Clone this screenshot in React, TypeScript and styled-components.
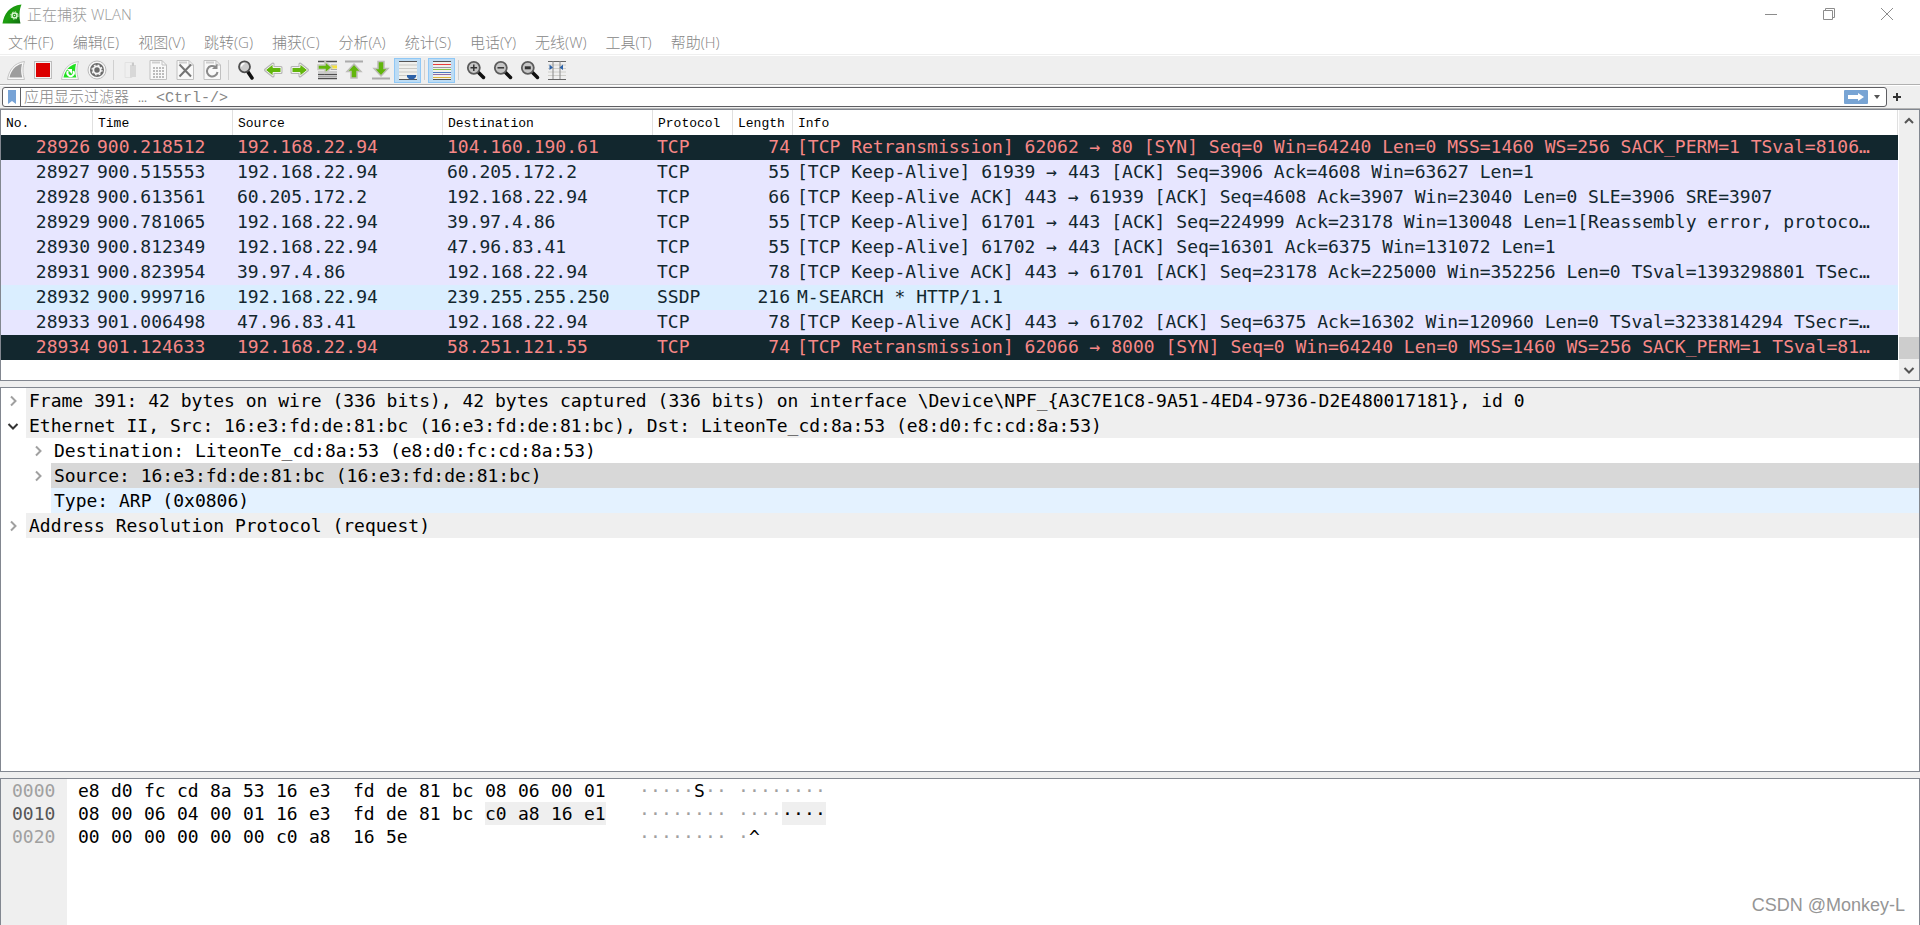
import React from 'react';
import styled, { createGlobalStyle, css } from 'styled-components';

const UI_FONT = '"Open Sans", "Noto Sans CJK SC", sans-serif';
const HEADER_FONT = '"Liberation Mono", "Noto Sans CJK SC", monospace';
const DATA_FONT = '"DejaVu Sans Mono", monospace';

const GlobalStyle = createGlobalStyle`
  *, *::before, *::after { box-sizing: border-box; }
  body { margin: 0; background: #efefef; }
  button { border: 0; padding: 0; margin: 0; background: none; font: inherit; color: inherit; }
  svg { display: block; }
`;

const Window = styled.div`
  position: relative;
  display: flex;
  flex-direction: column;
  height: 100vh;
  min-height: 600px;
  overflow: hidden;
  background: #efefef;
`;

/* ---- title bar and menu ---- */

const TitleBar = styled.header`
  display: flex;
  align-items: center;
  height: 29px;
  padding: 0 4px 1px 2px;
  background: #fff;
  color: #999;
  font: 300 15px/20px ${UI_FONT};
`;

const Title = styled.h1`
  flex: 1;
  margin: 0 0 0 5px;
  font: inherit;
`;

const WindowButton = styled.button`
  display: flex;
  align-items: center;
  justify-content: center;
  width: 58px;
  height: 28px;
`;

const MenuBar = styled.nav`
  display: flex;
  height: 27px;
  padding-bottom: 1px;
  border-bottom: 1px solid #fff;
  background: #fff;
  box-shadow: inset 0 -1px #efefef;
`;

const MenuButton = styled.button`
  padding: 0 11px 0 8px;
  color: #858585;
  font: 300 15px/26px ${UI_FONT};
`;

/* ---- toolbar ---- */

const ToolBar = styled.div`
  display: flex;
  align-items: center;
  height: 29px;
  padding-left: 2px;
  border-bottom: 1px solid #b0b0b0;
`;

const ToolButton = styled.button<{ $on?: boolean }>`
  display: flex;
  align-items: center;
  justify-content: center;
  width: 27px;
  height: 25px;
  border: 1px solid ${p => (p.$on ? '#90c8f6' : 'transparent')};
  background: ${p => (p.$on ? '#bddcf4' : 'none')};
`;

const ToolDivider = styled.span`
  width: 1px;
  height: 20px;
  margin: 0 3px;
  background: #d0d0d0;
`;

/* ---- display filter ---- */

const FilterBar = styled.form`
  display: flex;
  align-items: center;
  height: 24px;
  padding: 0 13px 0 2px;
  border-top: 1px solid #fff;
  border-bottom: 1px solid #b4b4b4;
`;

const FilterField = styled.div`
  display: flex;
  flex: 1;
  align-items: center;
  height: 20px;
  border: 1px solid #5e5e62;
  border-radius: 3px;
  background: #fff;
`;

const BookmarkButton = styled.button`
  display: flex;
  align-items: center;
  justify-content: center;
  width: 18px;
  height: 18px;
  border-right: 1px solid #5e5e62;
`;

const FilterInput = styled.input`
  flex: 1;
  min-width: 0;
  height: 18px;
  padding: 2px 3px 0;
  border: 0;
  outline: 0;
  background: transparent;
  color: #222;
  font: 300 15px/16px ${HEADER_FONT};
  &::placeholder { color: #858585; opacity: 1; }
`;

const ApplyButton = styled.button`
  display: flex;
  align-items: center;
  justify-content: center;
  width: 24px;
  height: 14px;
  border-radius: 1px;
  background: #78a4d4;
`;

const HistoryButton = styled.button`
  display: flex;
  align-items: center;
  justify-content: center;
  width: 18px;
  height: 18px;
`;

const AddButton = styled.button`
  display: flex;
  align-items: center;
  justify-content: center;
  width: 20px;
  height: 18px;
`;

/* ---- panes ---- */

const Pane = styled.section<{ $share: number; $last?: boolean }>`
  display: flex;
  flex: ${p => p.$share} 1 0;
  min-height: 0;
  overflow: hidden;
  border: 1px solid #828790;
  ${p => p.$last && css`border-bottom: 0;`}
  background: #fff;
`;

const Splitter = styled.div`
  flex: none;
  height: 6px;
`;

const PacketArea = styled.div`
  flex: 1;
  min-width: 0;
  overflow: hidden;
`;

const PacketTable = styled.table`
  width: 100%;
  table-layout: fixed;
  border-collapse: separate;
  border-spacing: 0;
`;

const Col = styled.col<{ $w?: number }>`
  width: ${p => (p.$w ? `${p.$w}px` : 'auto')};
`;

const HeadCell = styled.th`
  height: 25px;
  padding: 2px 0 0 5px;
  border-right: 1px solid #e0e0e0;
  color: #000;
  font: 13px/23px ${HEADER_FONT};
  text-align: left;
  white-space: nowrap;
`;

type Tone = 'bad' | 'tcp' | 'udp';

const tones: Record<Tone, { bg: string; fg: string }> = {
  bad: { bg: '#12272e', fg: '#f78787' },
  tcp: { bg: '#e7e6ff', fg: '#12272e' },
  udp: { bg: '#daeeff', fg: '#12272e' },
};

const PacketRow = styled.tr<{ $tone: Tone }>`
  background: ${p => tones[p.$tone].bg};
  color: ${p => tones[p.$tone].fg};
`;

const Cell = styled.td<{ $right?: boolean }>`
  height: 25px;
  padding: 0 3px 2px 4px;
  overflow: hidden;
  font: 18px/23px ${DATA_FONT};
  text-align: ${p => (p.$right ? 'right' : 'left')};
  text-overflow: ellipsis;
  white-space: nowrap;
`;

const ScrollBar = styled.div`
  display: flex;
  flex-direction: column;
  flex: none;
  width: 21px;
  border-left: 1px solid #fff;
  background: #efefef;
`;

const ScrollButton = styled.button`
  display: flex;
  align-items: center;
  justify-content: center;
  height: 21px;
`;

const ScrollTrack = styled.div`
  display: flex;
  flex: 1;
  flex-direction: column;
  justify-content: flex-end;
`;

const ScrollThumb = styled.div`
  height: 22px;
  background: #cdcdcd;
`;

/* ---- details tree ---- */

const Tree = styled.ul`
  flex: 1;
  min-width: 0;
  margin: 0;
  padding: 0;
  list-style: none;
`;

const TreeRow = styled.li<{ $level: number }>`
  display: flex;
  height: 25px;
  padding-left: ${p => p.$level * 25}px;
`;

const TreeToggle = styled.button`
  display: flex;
  align-items: center;
  justify-content: center;
  flex: none;
  width: 25px;
  height: 25px;
  padding-right: 2px;
`;

const TreeGap = styled.span`
  flex: none;
  width: 25px;
`;

const TreeText = styled.span<{ $bg: string }>`
  flex: 1;
  padding-left: 3px;
  overflow: hidden;
  background: ${p => p.$bg};
  color: #000;
  font: 18px/25px ${DATA_FONT};
  white-space: nowrap;
`;

/* ---- byte view ---- */

const Bytes = styled.div`
  display: flex;
  flex: 1;
  color: #000;
  font: 18px/23px ${DATA_FONT};
`;

const Offsets = styled.div`
  flex: none;
  width: 66px;
  padding-left: 11px;
  background: #efefef;
`;

const Offset = styled.div<{ $current?: boolean }>`
  color: ${p => (p.$current ? '#555' : '#a0a0a0')};
`;

const HexBlock = styled.div`
  padding-left: 11px;
`;

const AsciiBlock = styled.div`
  padding-left: 22px;
`;

const ByteLine = styled.div`
  display: flex;
  height: 23px;
`;

const Group = styled.span<{ $wide?: boolean }>`
  display: flex;
  min-width: ${p => (p.$wide ? 264 : 88)}px;
  & + & { margin-left: 11px; }
`;

const HexByte = styled.span<{ $marked?: boolean; $end?: boolean }>`
  width: 33px;
  ${p => p.$marked && css`background: #efefef;`}
  ${p => p.$end && css`width: 22px; margin-right: 11px;`}
`;

const AsciiChar = styled.span<{ $marked?: boolean; $dim?: boolean }>`
  width: 11px;
  text-align: center;
  color: ${p => (p.$dim ? '#a0a0a0' : '#000')};
  ${p => p.$marked && css`background: #efefef;`}
`;

const Watermark = styled.div`
  position: absolute;
  right: 15px;
  bottom: 8px;
  color: #959595;
  font: 18px/24px "Liberation Sans", sans-serif;
  text-shadow: -1px -1px #fff;
`;

/* ---- icons ---- */

const Icon = ({ children, size = 20 }: { children: React.ReactNode; size?: number }) => (
  <svg width={size} height={size} viewBox={`0 0 ${size} ${size}`} fill="none" aria-hidden="true">
    {children}
  </svg>
);

const Logo = () => (
  <Icon>
    <defs>
      <linearGradient id="logo" x1="0" y1="0" x2="1" y2="1">
        <stop offset="0" stopColor="#0b7d0b" />
        <stop offset="0.5" stopColor="#1ea00f" />
        <stop offset="1" stopColor="#0d6b10" />
      </linearGradient>
    </defs>
    <path d="M.5 19.5C2 10 7 2 19.5.5C17 6 17 13 18.500 19.500Z" fill="url(#logo)" />
    <circle cx="12.500" cy="11.500" r="2.500" stroke="#d8f5d0" strokeWidth="1.500" />
    <circle cx="12.500" cy="11.500" r="3.700" stroke="#d8f5d0" strokeWidth="1" strokeDasharray="1.400 1.500" />
    <circle cx="12.500" cy="11.500" r=".8" fill="#d8f5d0" />
  </Icon>
);

const FIN = 'M1.500 19.500C3 10 8 3 18.500 1.500C16.500 7 16.500 13 18.500 19.500Z';
const FIN_FILL = 'M3.500 17.500C5 11 9 5.500 16 3.800C14.800 9 14.800 13 16.300 17.500Z';

const StartIcon = () => (
  <Icon>
    <path d={FIN} fill="#fafafa" stroke="#c4c4c4" />
    <path d={FIN_FILL} fill="#9d9d9d" />
  </Icon>
);

const StopIcon = () => (
  <Icon>
    <rect x="1.500" y="1.500" width="17" height="17" fill="#f4f4f4" stroke="#bdbdbd" />
    <rect x="3" y="3" width="14" height="14" fill="#dc0000" />
  </Icon>
);

const RestartIcon = () => (
  <Icon>
    <path d={FIN} fill="#fafafa" stroke="#c4c4c4" />
    <path d={FIN_FILL} fill="#1fe01f" />
    <path d="M8 11a3.200 3.200 0 1 0 5.200 0" stroke="#fff" strokeWidth="2" />
    <path d="M7 9h5v5z" fill="#fff" />
  </Icon>
);

const OptionsIcon = () => (
  <Icon>
    <circle cx="10" cy="10" r="9" fill="#f7f7f7" stroke="#bbb" />
    <circle cx="10" cy="10" r="7" fill="#6b6b6b" />
    <circle cx="10" cy="10" r="3.600" stroke="#f7f7f7" strokeWidth="1.800" />
    <circle cx="10" cy="10" r="5" stroke="#f7f7f7" strokeWidth="1.200" strokeDasharray="1.900 2.027" />
  </Icon>
);

const FileIcon = () => (
  <Icon>
    <path d="M4 2.500h7v15H4z" fill="#efefef" stroke="#e2e2e2" />
    <path d="M9 5h6v12h-4L9 18z" fill="#d8d8d8" />
    <path d="M11 2.500h2V6h-2z" fill="#c9c9c9" />
  </Icon>
);

const Page = ({ children }: { children: React.ReactNode }) => (
  <Icon>
    <path d="M2 .5h12l4.500 4.500v14.500H2z" fill="#f9f9f9" stroke="#c0c0c0" />
    <path d="M14 .5V5h4.500" stroke="#c0c0c0" />
    <path d="M4 2.500h8" stroke="#cfcfcf" strokeWidth="2" />
    {children}
  </Icon>
);

const SaveIcon = () => (
  <Page>
    <path d="M5 8h11M5 11h11M5 14h11M5 17h11" stroke="#bcbcbc" strokeWidth="2" strokeDasharray="2 1" />
  </Page>
);

const CloseFileIcon = () => (
  <Page>
    <path d="M4.500 4.500l11.500 12M16 4.500l-11.500 12" stroke="#747474" strokeWidth="2" />
  </Page>
);

const ReloadIcon = () => (
  <Page>
    <path d="M13.500 7A5.300 5.300 0 1 0 15.500 12" stroke="#8a8a8a" strokeWidth="2" />
    <path d="M15.500 3.500v5.500H10Z" fill="#8a8a8a" />
  </Page>
);

const Lens = ({ children }: { children?: React.ReactNode }) => (
  <Icon>
    <path d="M12.500 12.500l5 5" stroke="#111" strokeWidth="3.500" strokeLinecap="round" />
    <circle cx="7.800" cy="7.800" r="6" fill="#c6c6c6" stroke="#5b5b5b" strokeWidth="1.800" />
    {children}
  </Icon>
);

const FindIcon = () => (
  <Icon>
    <path d="M12 12l4 6" stroke="#111" strokeWidth="3.500" strokeLinecap="round" />
    <circle cx="8.500" cy="6.800" r="5.500" fill="#ccc" stroke="#4f4f4f" strokeWidth="1.800" />
    <path d="M5.500 6.500a3 3 0 0 1 3-3" stroke="#fff" strokeWidth="1.500" />
  </Icon>
);

const ARROW_RIGHT = 'M2 7.500h8V4L17.500 10 10 16V12.500H2z';

const ArrowIcon = ({ turn }: { turn: number }) => (
  <Icon>
    <g transform={`rotate(${turn} 10 10)`}>
      <path d={ARROW_RIGHT} fill="#6b9f3a" stroke="#b5b5b5" strokeWidth="3" strokeLinejoin="round" />
      <path d={ARROW_RIGHT} fill="#62b60c" stroke="#f2f2ee" strokeWidth="1" />
    </g>
  </Icon>
);

const GotoIcon = () => (
  <Icon>
    <path d="M1 1.500h19M1 14.500h19M1 18.500h19" stroke="#4f4f4f" strokeWidth="1.500" />
    <path d="M14 5h6M14 9.500h6M1 12h19M1 16.500h19" stroke="#aaa" />
    <path d="M14 7h6" stroke="#f5e13c" strokeWidth="3" />
    <path d="M1 5h7V1.500L15 7.500 8 13v-3.500H1z" fill="#62b60c" stroke="#c8c8c0" strokeWidth="1.500" />
  </Icon>
);

const FirstIcon = () => (
  <Icon>
    <path d="M1 1.500h18" stroke="#ababab" strokeWidth="2" />
    <path d="M10 4l7 7.500h-4V18H7v-6.500H3z" fill="#62b60c" stroke="#bdbdb8" strokeWidth="1.500" />
  </Icon>
);

const LastIcon = () => (
  <Icon>
    <path d="M1 18.500h18" stroke="#ababab" strokeWidth="2" />
    <path d="M10 16l7-7.500h-4V1.500H7v7H3z" fill="#62b60c" stroke="#bdbdb8" strokeWidth="1.500" />
  </Icon>
);

const AutoScrollIcon = () => (
  <Icon>
    <rect x="1" y="1" width="18" height="18" fill="#f0f0ec" />
    <path d="M1 1.500h18M1 19.500h18" stroke="#555" />
    <path d="M1 5h18M1 8.500h18M1 12h18M1 15.500h18" stroke="#c9c9c4" />
    <path d="M9 15h9v2l-2.500 2.500h-4L9 17z" fill="#2d62a8" />
  </Icon>
);

const colourLines: [number, string][] = [
  [1.5, '#555'], [4.5, '#e83c3c'], [7.5, '#9a9aa4'], [9.5, '#8bc34a'], [12.5, '#4a78c0'], [14.5, '#8f6aa8'], [17.5, '#dcb23a'], [19.5, '#555'],
];

const ColorizeIcon = () => (
  <Icon>
    <rect x="1" y="1" width="18" height="18" fill="#f0f0ec" />
    {colourLines.map(([y, c]) => (
      <path key={y} d={`M1 ${y}h18`} stroke={c} />
    ))}
  </Icon>
);

const ResizeIcon = () => (
  <Icon>
    <path d="M1 1.500h18M1 19.500h18" stroke="#666" />
    <path d="M1 5h18M1 8.500h18M1 12h18M1 15.500h18" stroke="#cfcfca" />
    <path d="M6 1v18M13 1v18" stroke="#8a8a8a" />
    <path d="M2.500 4.500l3.500 3-3.500 2.500zM16 4.500l-3.500 3 3.500 2.500z" fill="#2d62a8" />
  </Icon>
);

const Chevron = ({ dir, color }: { dir: 'up' | 'down' | 'right'; color: string }) => {
  const d = { up: 'M2 8l4-4 4 4', down: 'M1.500 4l4.500 4.500L10.500 4', right: 'M4 1.500l4.500 4.500L4 10.500' }[dir];
  return (
    <Icon size={12}>
      <path d={d} stroke={color} strokeWidth="2" />
    </Icon>
  );
};

/* ---- data ---- */

const menus = ['文件(F)', '编辑(E)', '视图(V)', '跳转(G)', '捕获(C)', '分析(A)', '统计(S)', '电话(Y)', '无线(W)', '工具(T)', '帮助(H)'];

type Tool = { label: string; icon: React.ReactNode; on?: boolean };

const toolGroups: Tool[][] = [
  [
    { label: '开始捕获', icon: <StartIcon /> },
    { label: '停止捕获', icon: <StopIcon /> },
    { label: '重新开始捕获', icon: <RestartIcon /> },
    { label: '捕获选项', icon: <OptionsIcon /> },
  ],
  [
    { label: '打开', icon: <FileIcon /> },
    { label: '保存', icon: <SaveIcon /> },
    { label: '关闭', icon: <CloseFileIcon /> },
    { label: '重新加载', icon: <ReloadIcon /> },
  ],
  [
    { label: '查找分组', icon: <FindIcon /> },
    { label: '上一分组', icon: <ArrowIcon turn={180} /> },
    { label: '下一分组', icon: <ArrowIcon turn={0} /> },
    { label: '转到分组', icon: <GotoIcon /> },
    { label: '首个分组', icon: <FirstIcon /> },
    { label: '最新分组', icon: <LastIcon /> },
    { label: '自动滚动', icon: <AutoScrollIcon />, on: true },
  ],
  [{ label: '着色分组列表', icon: <ColorizeIcon />, on: true }],
  [
    { label: '放大', icon: <Lens><path d="M4.500 7.800h6.600M7.800 4.500v6.600" stroke="#333" strokeWidth="1.500" /></Lens> },
    { label: '缩小', icon: <Lens><path d="M4.500 7.800h6.600" stroke="#333" strokeWidth="1.500" /></Lens> },
    { label: '普通大小', icon: <Lens><path d="M4.800 7.800h6" stroke="#333" strokeWidth="3" /></Lens> },
    { label: '调整列宽', icon: <ResizeIcon /> },
  ],
];

type Packet = [Tone, string, string, string, string, string, string, string];

const packets: Packet[] = [
  ['bad', '28926', '900.218512', '192.168.22.94', '104.160.190.61', 'TCP', '74', '[TCP Retransmission] 62062 → 80 [SYN] Seq=0 Win=64240 Len=0 MSS=1460 WS=256 SACK_PERM=1 TSval=8106…'],
  ['tcp', '28927', '900.515553', '192.168.22.94', '60.205.172.2', 'TCP', '55', '[TCP Keep-Alive] 61939 → 443 [ACK] Seq=3906 Ack=4608 Win=63627 Len=1'],
  ['tcp', '28928', '900.613561', '60.205.172.2', '192.168.22.94', 'TCP', '66', '[TCP Keep-Alive ACK] 443 → 61939 [ACK] Seq=4608 Ack=3907 Win=23040 Len=0 SLE=3906 SRE=3907'],
  ['tcp', '28929', '900.781065', '192.168.22.94', '39.97.4.86', 'TCP', '55', '[TCP Keep-Alive] 61701 → 443 [ACK] Seq=224999 Ack=23178 Win=130048 Len=1[Reassembly error, protoco…'],
  ['tcp', '28930', '900.812349', '192.168.22.94', '47.96.83.41', 'TCP', '55', '[TCP Keep-Alive] 61702 → 443 [ACK] Seq=16301 Ack=6375 Win=131072 Len=1'],
  ['tcp', '28931', '900.823954', '39.97.4.86', '192.168.22.94', 'TCP', '78', '[TCP Keep-Alive ACK] 443 → 61701 [ACK] Seq=23178 Ack=225000 Win=352256 Len=0 TSval=1393298801 TSec…'],
  ['udp', '28932', '900.999716', '192.168.22.94', '239.255.255.250', 'SSDP', '216', 'M-SEARCH * HTTP/1.1'],
  ['tcp', '28933', '901.006498', '47.96.83.41', '192.168.22.94', 'TCP', '78', '[TCP Keep-Alive ACK] 443 → 61702 [ACK] Seq=6375 Ack=16302 Win=120960 Len=0 TSval=3233814294 TSecr=…'],
  ['bad', '28934', '901.124633', '192.168.22.94', '58.251.121.55', 'TCP', '74', '[TCP Retransmission] 62066 → 8000 [SYN] Seq=0 Win=64240 Len=0 MSS=1460 WS=256 SACK_PERM=1 TSval=81…'],
];

const columns: { name: string; width?: number }[] = [
  { name: 'No.', width: 92 },
  { name: 'Time', width: 140 },
  { name: 'Source', width: 210 },
  { name: 'Destination', width: 210 },
  { name: 'Protocol', width: 80 },
  { name: 'Length', width: 60 },
  { name: 'Info' },
];

type Node = { level: number; state?: 'open' | 'closed'; bg: string; text: string };

const nodes: Node[] = [
  { level: 0, state: 'closed', bg: '#efefef', text: 'Frame 391: 42 bytes on wire (336 bits), 42 bytes captured (336 bits) on interface \\Device\\NPF_{A3C7E1C8-9A51-4ED4-9736-D2E480017181}, id 0' },
  { level: 0, state: 'open', bg: '#efefef', text: 'Ethernet II, Src: 16:e3:fd:de:81:bc (16:e3:fd:de:81:bc), Dst: LiteonTe_cd:8a:53 (e8:d0:fc:cd:8a:53)' },
  { level: 1, state: 'closed', bg: '#fff', text: 'Destination: LiteonTe_cd:8a:53 (e8:d0:fc:cd:8a:53)' },
  { level: 1, state: 'closed', bg: '#d8d8d8', text: 'Source: 16:e3:fd:de:81:bc (16:e3:fd:de:81:bc)' },
  { level: 1, bg: '#e4f2ff', text: 'Type: ARP (0x0806)' },
  { level: 0, state: 'closed', bg: '#efefef', text: 'Address Resolution Protocol (request)' },
];

const byteLines = [
  { offset: '0000', hex: 'e8 d0 fc cd 8a 53 16 e3 fd de 81 bc 08 06 00 01', ascii: '·····S··········' },
  { offset: '0010', hex: '08 00 06 04 00 01 16 e3 fd de 81 bc c0 a8 16 e1', ascii: '················', markFrom: 12 },
  { offset: '0020', hex: '00 00 00 00 00 00 c0 a8 16 5e', ascii: '·········^' },
];

const halves = <T,>(items: T[]): T[][] => [items.slice(0, 8), items.slice(8)];

export default function App() {
  return (
    <Window>
      <GlobalStyle />
      <TitleBar>
        <Logo />
        <Title>正在捕获 WLAN</Title>
        <WindowButton type="button" aria-label="最小化">
          <Icon size={12}><path d="M0 6.500h12" stroke="#8c8c8c" /></Icon>
        </WindowButton>
        <WindowButton type="button" aria-label="还原">
          <Icon size={12}><path d="M.5 2.500h9v9h-9zM2.500 2.500v-2h9v9h-2" stroke="#8c8c8c" /></Icon>
        </WindowButton>
        <WindowButton type="button" aria-label="关闭窗口">
          <Icon size={12}><path d="M0 0l12 12M12 0L0 12" stroke="#8c8c8c" /></Icon>
        </WindowButton>
      </TitleBar>

      <MenuBar>
        {menus.map(m => <MenuButton type="button" key={m}>{m}</MenuButton>)}
      </MenuBar>

      <ToolBar>
        {toolGroups.map((group, i) => (
          <React.Fragment key={i}>
            {i > 0 && <ToolDivider />}
            {group.map(t => (
              <ToolButton type="button" key={t.label} aria-label={t.label} aria-pressed={t.on} $on={t.on}>
                {t.icon}
              </ToolButton>
            ))}
          </React.Fragment>
        ))}
      </ToolBar>

      <FilterBar onSubmit={e => e.preventDefault()}>
        <FilterField>
          <BookmarkButton type="button" aria-label="管理过滤器">
            <svg width="8" height="14" viewBox="0 0 8 14" aria-hidden="true">
              <path d="M0 0h8v14L4 11 0 14z" fill="#77a3d6" />
            </svg>
          </BookmarkButton>
          <FilterInput type="text" aria-label="显示过滤器" placeholder="应用显示过滤器 … <Ctrl-/>" />
          <ApplyButton type="submit" aria-label="应用">
            <svg width="16" height="8" viewBox="0 0 16 8" aria-hidden="true">
              <path d="M0 2h10V0l6 4-6 4V6H0z" fill="#fff" />
            </svg>
          </ApplyButton>
          <HistoryButton type="button" aria-label="最近的过滤器">
            <svg width="6" height="4" viewBox="0 0 6 4" aria-hidden="true">
              <path d="M0 0h6L3 4z" fill="#555" />
            </svg>
          </HistoryButton>
        </FilterField>
        <AddButton type="button" aria-label="添加过滤器按钮">
          <svg width="8" height="8" viewBox="0 0 8 8" aria-hidden="true">
            <path d="M0 4h8M4 0v8" stroke="#333" strokeWidth="2" />
          </svg>
        </AddButton>
      </FilterBar>

      <Pane $share={272} aria-label="分组列表">
        <PacketArea>
          <PacketTable>
            <colgroup>
              {columns.map(c => <Col key={c.name} $w={c.width} />)}
            </colgroup>
            <thead>
              <tr>{columns.map(c => <HeadCell key={c.name} scope="col">{c.name}</HeadCell>)}</tr>
            </thead>
            <tbody>
              {packets.map(([tone, ...cells]) => (
                <PacketRow key={cells[0]} $tone={tone}>
                  {cells.map((c, i) => <Cell key={i} $right={i === 0 || i === 5}>{c}</Cell>)}
                </PacketRow>
              ))}
            </tbody>
          </PacketTable>
        </PacketArea>
        <ScrollBar>
          <ScrollButton type="button" aria-label="向上滚动"><Chevron dir="up" color="#555" /></ScrollButton>
          <ScrollTrack><ScrollThumb /></ScrollTrack>
          <ScrollButton type="button" aria-label="向下滚动"><Chevron dir="down" color="#555" /></ScrollButton>
        </ScrollBar>
      </Pane>
      <Splitter />

      <Pane $share={385} aria-label="分组详情">
        <Tree>
          {nodes.map(n => (
            <TreeRow key={n.text} $level={n.level}>
              {n.state ? (
                <TreeToggle type="button" aria-label={n.text} aria-expanded={n.state === 'open'}>
                  <Chevron dir={n.state === 'open' ? 'down' : 'right'} color={n.state === 'open' ? '#333' : '#a0a0a0'} />
                </TreeToggle>
              ) : <TreeGap />}
              <TreeText $bg={n.bg}>{n.text}</TreeText>
            </TreeRow>
          ))}
        </Tree>
      </Pane>
      <Splitter />

      <Pane $share={147} $last aria-label="分组字节流">
        <Bytes>
          <Offsets>
            {byteLines.map(l => <Offset key={l.offset} $current={l.markFrom !== undefined}>{l.offset}</Offset>)}
          </Offsets>
          <HexBlock>
            {byteLines.map(({ offset, hex, markFrom = 99 }) => (
              <ByteLine key={offset}>
                {halves(hex.split(' ')).map((half, h) => (
                  <Group key={h} $wide>
                    {half.map((b, i) => {
                      const at = h * 8 + i;
                      return <HexByte key={at} $marked={at >= markFrom} $end={at === 15}>{b}</HexByte>;
                    })}
                  </Group>
                ))}
              </ByteLine>
            ))}
          </HexBlock>
          <AsciiBlock>
            {byteLines.map(({ offset, ascii, markFrom = 99 }) => (
              <ByteLine key={offset}>
                {halves(ascii.split('')).map((half, h) => (
                  <Group key={h}>
                    {half.map((c, i) => {
                      const marked = h * 8 + i >= markFrom;
                      return <AsciiChar key={i} $marked={marked} $dim={c === '·' && !marked}>{c}</AsciiChar>;
                    })}
                  </Group>
                ))}
              </ByteLine>
            ))}
          </AsciiBlock>
        </Bytes>
      </Pane>

      <Watermark>CSDN @Monkey-L</Watermark>
    </Window>
  );
}
